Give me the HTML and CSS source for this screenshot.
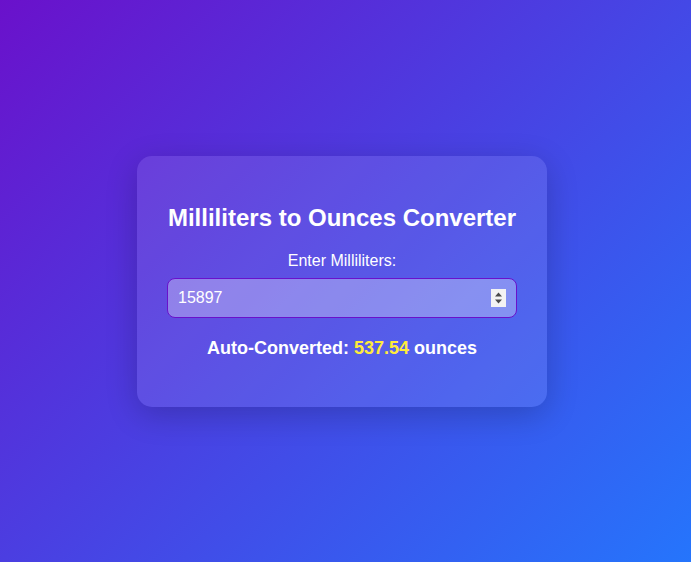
FILE: index.html
```html
<!DOCTYPE html>
<html>
<head>
<meta charset="utf-8">
<link rel="stylesheet" href="styles.css">
</head>
<body>
<div class="card">
  <h2 class="title">Milliliters to Ounces Converter</h2>
  <label class="label" for="ml">Enter Milliliters:</label>
  <div class="field-wrap">
    <input class="field" id="ml" type="number" value="15897">
    <span class="spin" aria-hidden="true">
      <svg width="15" height="18" viewBox="0 0 15 18">
        <path d="M7.5 3.5 L11 7.5 L4 7.5 Z" fill="#4a4a4a"/>
        <path d="M7.5 14.5 L11 10.5 L4 10.5 Z" fill="#4a4a4a"/>
      </svg>
    </span>
  </div>
  <p class="result">Auto-Converted: <span class="value">537.54</span> ounces</p>
</div>
</body>
</html>
```
FILE: styles.css
```css
html, body {
  margin: 0;
  height: 100%;
}
body {
  font-family: "Liberation Sans", Arial, sans-serif;
  background: linear-gradient(135deg, #6a11cb 0%, #2575fc 100%);
  display: flex;
  align-items: center;
  justify-content: center;
  color: #fff;
}
.card {
  width: 410px;
  box-sizing: border-box;
  padding: 30px;
  background: rgba(255, 255, 255, 0.1);
  border-radius: 15px;
  box-shadow: 0 8px 32px rgba(0, 0, 0, 0.2);
  text-align: center;
  margin-right: 7px;
  margin-top: 1px;
}
.title {
  font-size: 24px;
  margin: 18px 0 20px;
}
.label {
  display: block;
  font-size: 16px;
  margin-bottom: 8px;
}
.field-wrap {
  position: relative;
}
.field {
  display: block;
  width: 100%;
  box-sizing: border-box;
  height: 40px;
  padding: 8px 10px;
  font-family: "Liberation Sans", Arial, sans-serif;
  font-size: 16px;
  color: #fff;
  background: rgba(255, 255, 255, 0.3);
  border: 1px solid #6a11cb;
  border-radius: 8px;
  outline: none;
  -moz-appearance: textfield;
}
.field::-webkit-inner-spin-button,
.field::-webkit-outer-spin-button {
  -webkit-appearance: none;
  margin: 0;
}
.spin {
  position: absolute;
  right: 11px;
  top: 11px;
  width: 15px;
  height: 18px;
  background: #f3f3f3;
  display: flex;
}
.result {
  font-size: 18px;
  font-weight: bold;
  margin: 20px 0 18px;
}
.value {
  color: #ffeb3b;
}
```
